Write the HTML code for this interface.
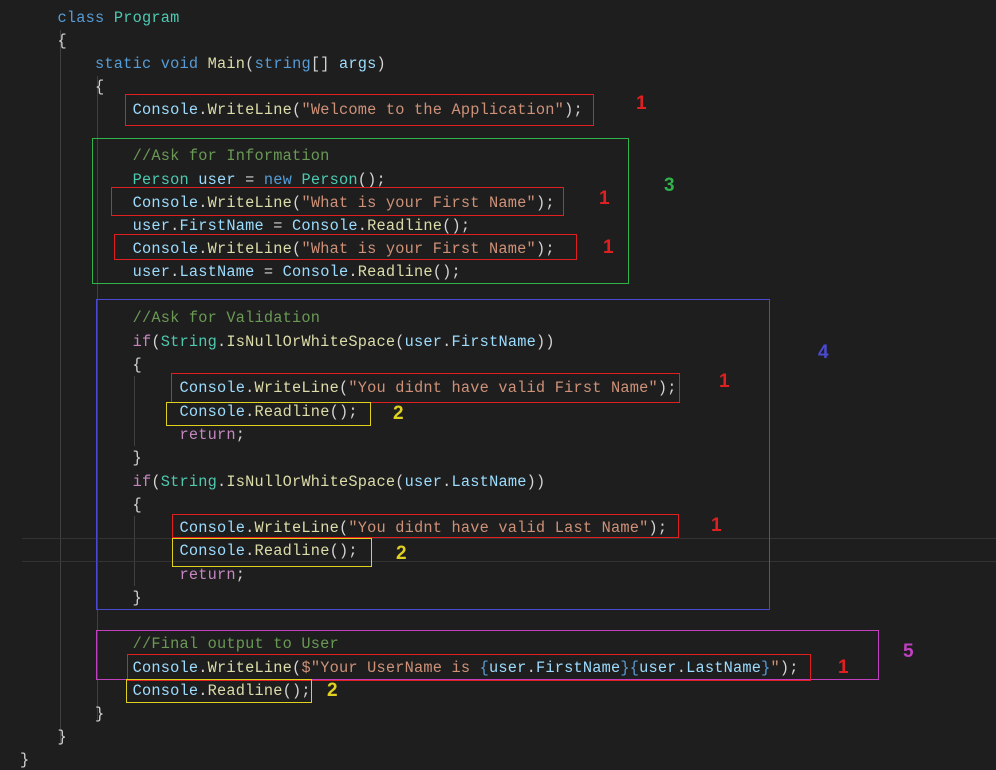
<!DOCTYPE html><html><head><style>
body{margin:0;width:996px;height:768px;background:#1e1e1e;overflow:hidden;position:relative;font-family:"Liberation Mono",monospace;font-size:15.3px}
.l{position:absolute;left:20px;white-space:pre;color:#d4d4d4;line-height:20px;letter-spacing:0.2px;margin-top:2px}
.k{color:#569cd6}.c{color:#4ec9b0}.v{color:#9cdcfe}.f{color:#dcdcaa}.s{color:#ce9178}.g{color:#6a9955}.r{color:#c586c0}
.b{position:absolute;border:1px solid}
.n{position:absolute;font-family:"Liberation Sans",sans-serif;font-weight:bold;font-size:19px}
.gd{position:absolute;width:1px;background:#404040}
</style></head><body>
<div class="gd" style="left:60px;top:30px;height:715px"></div>
<div class="gd" style="left:97px;top:76px;height:645px"></div>
<div class="gd" style="left:134px;top:376px;height:70px"></div>
<div class="gd" style="left:134px;top:516px;height:70px"></div>
<div style="position:absolute;left:22px;top:538px;width:974px;height:22px;border-top:1px solid #333;border-bottom:1px solid #333"></div>
<div class="l" style="top:6px">    <span class="k">class</span> <span class="c">Program</span></div>
<div class="l" style="top:29px">    {</div>
<div class="l" style="top:52px">        <span class="k">static</span> <span class="k">void</span> <span class="f">Main</span>(<span class="k">string</span>[] <span class="v">args</span>)</div>
<div class="l" style="top:75px">        {</div>
<div class="l" style="top:98px">            <span class="v">Console</span>.<span class="f">WriteLine</span>(<span class="s">"Welcome to the Application"</span>);</div>
<div class="l" style="top:144px">            <span class="g">//Ask for Information</span></div>
<div class="l" style="top:168px">            <span class="c">Person</span> <span class="v">user</span> = <span class="k">new</span> <span class="c">Person</span>();</div>
<div class="l" style="top:191px">            <span class="v">Console</span>.<span class="f">WriteLine</span>(<span class="s">"What is your First Name"</span>);</div>
<div class="l" style="top:214px">            <span class="v">user</span>.<span class="v">FirstName</span> = <span class="v">Console</span>.<span class="f">Readline</span>();</div>
<div class="l" style="top:237px">            <span class="v">Console</span>.<span class="f">WriteLine</span>(<span class="s">"What is your First Name"</span>);</div>
<div class="l" style="top:260px">            <span class="v">user</span>.<span class="v">LastName</span> = <span class="v">Console</span>.<span class="f">Readline</span>();</div>
<div class="l" style="top:306px">            <span class="g">//Ask for Validation</span></div>
<div class="l" style="top:330px">            <span class="r">if</span>(<span class="c">String</span>.<span class="f">IsNullOrWhiteSpace</span>(<span class="v">user</span>.<span class="v">FirstName</span>))</div>
<div class="l" style="top:353px">            {</div>
<div class="l" style="top:376px">                 <span class="v">Console</span>.<span class="f">WriteLine</span>(<span class="s">"You didnt have valid First Name"</span>);</div>
<div class="l" style="top:400px">                 <span class="v">Console</span>.<span class="f">Readline</span>();</div>
<div class="l" style="top:423px">                 <span class="r">return</span>;</div>
<div class="l" style="top:446px">            }</div>
<div class="l" style="top:470px">            <span class="r">if</span>(<span class="c">String</span>.<span class="f">IsNullOrWhiteSpace</span>(<span class="v">user</span>.<span class="v">LastName</span>))</div>
<div class="l" style="top:493px">            {</div>
<div class="l" style="top:516px">                 <span class="v">Console</span>.<span class="f">WriteLine</span>(<span class="s">"You didnt have valid Last Name"</span>);</div>
<div class="l" style="top:539px">                 <span class="v">Console</span>.<span class="f">Readline</span>();</div>
<div class="l" style="top:563px">                 <span class="r">return</span>;</div>
<div class="l" style="top:586px">            }</div>
<div class="l" style="top:632px">            <span class="g">//Final output to User</span></div>
<div class="l" style="top:656px">            <span class="v">Console</span>.<span class="f">WriteLine</span>(<span class="s">$"Your UserName is </span><span class="k">{</span><span class="v">user</span>.<span class="v">FirstName</span><span class="k">}{</span><span class="v">user</span>.<span class="v">LastName</span><span class="k">}</span><span class="s">"</span>);</div>
<div class="l" style="top:679px">            <span class="v">Console</span>.<span class="f">Readline</span>();</div>
<div class="l" style="top:702px">        }</div>
<div class="l" style="top:725px">    }</div>
<div class="l" style="top:748px">}</div>

<div class="b" style="border-color:#e02020;left:125px;top:94px;width:467px;height:30px"></div>
<div class="b" style="border-color:#2fb34a;left:92px;top:138px;width:535px;height:144px"></div>
<div class="b" style="border-color:#e02020;left:111px;top:187px;width:451px;height:27px"></div>
<div class="b" style="border-color:#e02020;left:114px;top:234px;width:461px;height:24px"></div>
<div class="b" style="border-color:#4a4ad0;left:96px;top:299px;width:672px;height:309px"></div>
<div class="b" style="border-color:#e02020;left:171px;top:373px;width:507px;height:28px"></div>
<div class="b" style="border-color:#e0d020;left:166px;top:402px;width:203px;height:22px"></div>
<div class="b" style="border-color:#e02020;left:172px;top:514px;width:505px;height:22px"></div>
<div class="b" style="border-color:#e0d020;left:172px;top:538px;width:198px;height:27px"></div>
<div class="b" style="border-color:#c040c0;left:96px;top:630px;width:781px;height:48px"></div>
<div class="b" style="border-color:#e02020;left:127px;top:654px;width:682px;height:25px"></div>
<div class="b" style="border-color:#e0d020;left:126px;top:679px;width:184px;height:22px"></div>

<div class="n" style="color:#e02020;left:636px;top:93px">1</div>
<div class="n" style="color:#2fb34a;left:664px;top:175px">3</div>
<div class="n" style="color:#e02020;left:599px;top:188px">1</div>
<div class="n" style="color:#e02020;left:603px;top:237px">1</div>
<div class="n" style="color:#4a4ad0;left:818px;top:342px">4</div>
<div class="n" style="color:#e02020;left:719px;top:371px">1</div>
<div class="n" style="color:#e0d020;left:393px;top:403px">2</div>
<div class="n" style="color:#e02020;left:711px;top:515px">1</div>
<div class="n" style="color:#e0d020;left:396px;top:543px">2</div>
<div class="n" style="color:#c040c0;left:903px;top:641px">5</div>
<div class="n" style="color:#e02020;left:838px;top:657px">1</div>
<div class="n" style="color:#e0d020;left:327px;top:680px">2</div>
</body></html>
